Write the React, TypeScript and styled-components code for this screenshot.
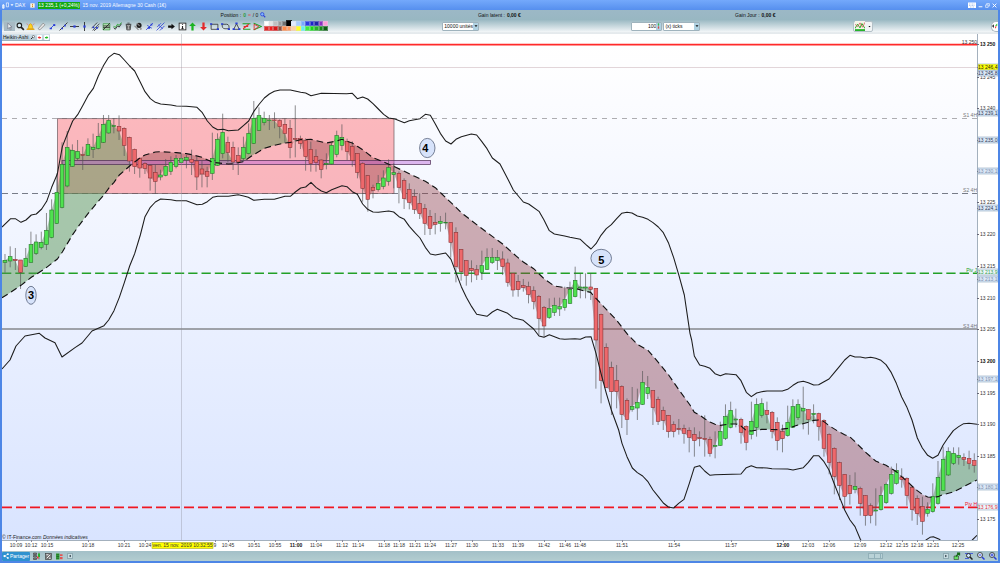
import React from 'react';
import styled, { createGlobalStyle } from 'styled-components';

const GlobalStyle = createGlobalStyle`
  *, *::before, *::after { box-sizing: border-box; }
  body { margin: 0; background: #4d86e6; }
  body, button, input, select { font-family: "Liberation Sans", Arial, sans-serif; font-size: 5px; line-height: 6px; color: #111; }
  button, input, select { margin: 0; padding: 0; border: 0; background: none; }
`;

/* ---------- market data, in thirds of a screen unit ---------- */

type Candle = { x: number; hi: number; top: number; bot: number; lo: number; up: boolean };
type Pt = [number, number];

const STEP = 15.55;

const blocks: { first: number; base: number; rows: string }[] = [
  {
    first: 0,
    base: 120,
    rows: `642 661 667 698 g,619 650 663 682 g,624 658 662 690 r,660 660 697 747 r,624 655 679 680 g,575 614 667 667 g,
583 606 640 645 g,575 607 622 628 g,519 571 613 630 g,478 510 592 595 g,400 457 550 552 g,307 373 502 505 g,
273 322 438 442 g,313 331 379 381 g,300 334 355 362 g,320 344 346 390 r,295 313 346 348 g,281 322 328 354 g,
249 289 325 328 g,225 253 307 309 g,225 241 279 281 g,234 257 260 280 g,226 259 273 300 r,262 265 316 348 r,
290 292 363 395 r,326 328 380 402 r,352 355 384 413 r,367 371 385 402 r,373 377 414 452 r,375 397 424 462 r,
389 405 411 421 g,357 379 406 409 g,349 367 394 405 g,345 355 379 385 g,340 355 368 370 g,345 353 360 385 g,
329 358 367 405 r,350 363 411 450 r,362 387 402 442 r,380 394 409 442 r,278 355 400 420 g,280 298 376 378 g,
221 277 341 355 g,290 307 337 367 r,305 322 366 390 r,322 347 366 405 r,290 322 355 365 g,250 280 341 343 g`,
  },
  {
    first: 48,
    base: 210,
    rows: `93 145 220 222 g,112 137 181 183 g,125 145 158 166 g,135 150 152 180 g,127 150 152 175 r,148 152 170 205 r,
145 163 190 220 r,150 175 233 265 r,106 205 208 262 r,197 206 220 237 r,205 212 260 302 r,215 238 281 305 r,
238 260 277 305 r,268 270 298 325 r,250 280 283 298 g,219 226 282 284 g,182 197 253 262 g,163 203 226 241 g,
206 214 244 270 r,214 230 271 290 r,250 250 307 325 r,277 280 355 395 r,316 317 388 425 r,344 352 361 385 r,
315 340 359 365 g,301 324 349 358 g,268 293 334 347 g,280 308 314 355 g,304 310 352 400 r,325 332 386 417 r,
340 359 397 418 r,358 379 418 432 r,370 400 431 447 r,402 415 460 495 r,420 439 475 495 r,429 457 463 493 r,
438 454 460 485 g,428 457 459 478 g,457 458 517 563 r,472 487 589 637 r,538 538 605 632 r,571 572 616 647 r,
571 595 601 637 r,585 599 615 630 r,542 587 607 630 g,535 562 598 600 g`,
  },
  {
    first: 94,
    base: 570,
    rows: `174 203 217 222 g,180 203 211 240 g,184 207 230 255 r,206 219 277 290 r,250 250 300 320 r,255 275 299 320 r,
267 287 292 305 r,275 290 313 340 r,289 302 335 358 r,315 319 385 437 r,348 352 408 440 r,325 355 382 387 g,
323 346 367 378 g,323 350 357 378 g,290 328 353 362 g,275 298 340 342 g,230 271 320 322 g,250 291 294 325 g,
250 291 294 325 g,250 291 298 330 r,295 295 450 596 r,371 373 571 640 r,460 472 592 594 r,515 532 605 675 r,
525 571 605 655 r,586 589 673 714 r,625 631 688 735 r,591 649 658 665 g,596 637 654 690 g,543 577 643 645 g,
558 592 611 627 g`,
  },
  {
    first: 125,
    base: 1020,
    rows: `151 152 203 255 r,170 178 244 255 r,200 211 241 270 r,225 226 275 293 r,244 253 275 292 r,237 265 268 284 r,
254 266 280 311 r,262 272 292 337 r,262 283 302 350 r,274 293 296 319 r,226 295 298 350 r,290 298 340 350 r,
274 316 319 355 g,245 274 316 318 g,193 230 295 300 g,185 211 262 265 g,206 237 240 262 g,233 238 277 311 r,
256 259 307 331 r,185 244 283 298 g,175 193 262 290 g,175 191 226 233 g,185 211 223 250 r,213 217 274 295 r,
232 247 302 331 r,254 275 296 337 r,197 247 287 290 g,178 200 262 264 g,178 194 233 240 g,140 205 213 268 g,
208 209 238 284 r,193 220 224 250 g,218 221 260 302 r,238 241 325 350 r,280 284 367 403 r,322 325 409 463 r,
365 368 436 480 r,403 403 469 510 r,405 436 461 494 r,397 439 449 460 g,440 445 490 527 r,466 467 527 557 r,
490 497 526 550 r,445 510 513 557 g,439 467 509 512 g,428 433 488 492 g,380 403 460 464 g,370 391 430 434 g,
385 411 418 443 r,412 415 466 497 r,440 443 509 542 r,466 475 521 555 r,470 499 544 584 r,487 508 520 530 g,
430 470 515 518 g,363 412 490 494 g,320 358 451 453 g,322 335 405 408 g,322 340 370 375 g,322 346 353 374 g,
340 352 358 378 r,332 355 370 388 r,340 361 376 398 r`,
  },
];

const candles: Candle[] = blocks.flatMap(({ first, base, rows }) =>
  rows.split(',').map((row, i) => {
    const [hi, top, bot, lo, dir] = row.trim().split(' ');
    return {
      x: 15 + STEP * (first + i),
      hi: base + Number(hi),
      top: base + Number(top),
      bot: base + Number(bot),
      lo: base + Number(lo),
      up: dir === 'g',
    };
  })
);

const shift = (dx: number, dy: number, src: string): Pt[] =>
  src.trim().split(/\s+/).map((p) => {
    const [x, y] = p.split(',').map(Number);
    return [x + dx, y + dy];
  });

const upperBand: Pt[] = [
  ...shift(0, 120, `6,561 32,536 46,536 63,547 78,540 94,525 109,522 125,507 140,484 155,442 172,402 187,320 202,282 218,243
233,224 248,197 264,167 280,145 295,108 311,76 326,52 342,40 358,44 373,60 389,78 404,93 421,127 435,155 451,176 466,187
482,192 513,195 529,198 559,199 591,202 607,218 622,243 638,261 653,269 670,268 685,272 715,270 731,256`),
  ...shift(720, 210, `26,153 41,125 58,102 73,84 88,72 103,64 120,60 151,60 182,67 197,69 213,77 244,70 320,71 337,70 352,86
368,81 383,87 399,101 415,117 431,133 446,144 465,147 493,158 508,152 540,146 556,133 571,136 586,162 601,190 617,213
633,222 648,208 664,200 694,192 710,195 725,214 741,236`),
  ...shift(1320, 570, `157,-96 180,-78 205,-30 220,0 235,18 250,36 266,42 297,64 312,90 328,122 343,132 374,138 390,142 421,148
437,163 453,177 468,161 483,136 499,116 514,104 530,86 545,70 561,67 576,69 592,78 608,82 624,88 639,98 655,111 670,128
686,160 701,203 717,257 733,315 750,430`),
  ...shift(1800, 1020, `275,0 283,48 299,75 314,79 330,85 345,101 361,107 377,101 408,104 423,122 439,157 454,170 470,159
485,155 501,153 547,153 563,148 579,136 594,127 610,124 625,128 641,135 656,134 672,125 687,117 703,98 718,80`),
  ...shift(2340, 1020, `194,60 210,46 225,51 241,51 256,54 272,52 287,55 303,61 318,74 334,98 349,130 365,171 380,200 396,240
412,294 427,324 443,346 458,355 474,346 489,316 505,292 520,272 536,260 551,251 567,250 591,253`),
];

const lowerBand: Pt[] = [
  ...shift(0, 0, `6,1107 30,1080 48,1038 75,1008 118,1000 135,1014 165,1028 186,1071 225,1043 246,1029 276,993 312,977 326,960`),
  ...shift(0, 120, `342,812 358,772 373,728 389,678 404,641 421,585 435,530 451,502 466,486 482,477 513,479 529,482 559,482
575,488 591,494 607,493 622,485 638,472 653,469 685,469 715,464 731,468`),
  ...shift(720, 210, `25,382 41,391 73,388 103,388 135,379 151,379 166,366 182,354 197,351 213,337 228,352 244,363 259,368
275,359 306,347 321,350 337,365 352,373 368,402 383,418 399,426 415,427 446,423 461,426 477,440 493,448 508,469 524,487
540,504 556,532 571,552 586,555 617,549 633,568 648,608`),
  ...shift(1320, 570, `64,290 79,322 95,350 110,373 141,379 157,366 172,358 203,370 219,383 250,391 281,417 297,438 312,442
328,434 359,446 374,448 405,446 421,448 437,441 453,440 468,490 483,550 499,610 514,660`),
  ...shift(1800, 1020, `56,270 66,310 81,350 97,384 112,398 128,408 143,424 159,450 175,470 190,489 205,501 221,504 236,490
252,478 268,430 283,382 299,377 314,393 330,406 345,404 423,402 439,383 454,377 470,383 501,384 516,386 563,387 579,390
610,383 625,367 641,347 656,347 672,365 687,390 703,432 718,470`),
  ...shift(2340, 1020, `194,510 210,540 225,560 241,598 300,680 400,650 438,600 450,592 460,590 478,598 530,640 577,600 591,586`),
];

const average: Pt[] = [
  ...shift(0, 120, `6,773 32,757 63,736 94,712 109,703 140,682 172,657 187,636 202,611 218,584 233,562 264,521 295,484 311,466
326,445 342,427 358,405 373,392 389,378 404,366 421,353 435,345 466,336 482,335 529,338 559,341 575,344 607,352 638,367
685,372 700,371 731,365`),
  ...shift(720, 210, `26,264 41,254 73,235 103,226 135,219 151,217 182,209 213,208 228,212 259,219 290,213 306,208 321,214
337,219 352,229 368,239 399,263 431,276 461,289 493,304 524,319 556,334 586,353 617,383 648,412 664,428 710,464 750,494`),
  ...shift(1320, 570, `188,162 219,190 250,216 281,236 312,266 343,288 374,293 405,295 437,304 452,307 468,325 499,358 530,391
561,431 592,463 624,481 655,517 686,555 717,600 750,645`),
  ...shift(1800, 1020, `283,217 299,225 314,236 330,246 345,253 361,256 392,252 408,252 423,258 439,272 454,273 485,268
532,269 563,265 594,255 625,247 641,241 656,240 672,245 687,257 718,276`),
  ...shift(2340, 1020, `194,284 210,291 225,305 256,336 287,363 318,376 349,395 365,410 380,423 396,438 412,452 427,463
443,471 458,472 474,470 489,464 520,456 551,440 591,420`),
];

const toPath = (pts: Pt[]) => 'M' + pts.map(([x, y]) => `${x} ${y}`).join('L');

const averageAt = (x: number) => {
  const i = average.findIndex((p) => p[0] >= x);
  if (i <= 0) return average[i === 0 ? 0 : average.length - 1][1];
  const [x0, y0] = average[i - 1];
  const [x1, y1] = average[i];
  return y0 + ((y1 - y0) * (x - x0)) / (x1 - x0);
};

/* Area between the moving average and the closes, split where they cross. */
const clouds = (() => {
  const rows = candles.map((c) => ({ x: c.x, close: c.up ? c.top : c.bot, avg: averageAt(c.x) }));
  rows.unshift({ ...rows[0], x: 6, avg: averageAt(6) });
  rows.push({ ...rows[rows.length - 1], x: 2931, avg: averageAt(2931) });
  let green = '';
  let red = '';
  for (let i = 1; i < rows.length; i++) {
    const a = rows[i - 1];
    const b = rows[i];
    const da = a.avg - a.close;
    const db = b.avg - b.close;
    if (da * db >= 0) {
      const d = `M${a.x} ${a.avg}L${b.x} ${b.avg}L${b.x} ${b.close}L${a.x} ${a.close}Z`;
      if (da + db > 0) green += d;
      else red += d;
    } else {
      const t = da / (da - db);
      const mx = a.x + (b.x - a.x) * t;
      const my = a.avg + (b.avg - a.avg) * t;
      const left = `M${a.x} ${a.avg}L${mx} ${my}L${a.x} ${a.close}Z`;
      const right = `M${mx} ${my}L${b.x} ${b.avg}L${b.x} ${b.close}Z`;
      if (da > 0) {
        green += left;
        red += right;
      } else {
        red += left;
        green += right;
      }
    }
  }
  return { green, red };
})();

type Tone = 'plain' | 'bold' | 'yellow' | 'dark' | 'soft' | 'green' | 'red';
const prices: [string, number, Tone][] = [
  ['13 250', 44, 'bold'], ['13 245', 77, 'plain'], ['13 245,8', 73, 'dark'], ['13 246,4', 67, 'yellow'],
  ['13 240', 108, 'plain'], ['13 239,1', 113, 'dark'], ['13 235,0', 140, 'dark'], ['13 230,1', 171, 'soft'],
  ['13 225', 202, 'plain'], ['13 224,1', 208, 'dark'], ['13 220', 234, 'plain'], ['13 215', 266, 'plain'],
  ['13 213,1', 279, 'soft'], ['13 213,9', 272, 'green'], ['13 210', 298, 'plain'], ['13 205', 329, 'plain'],
  ['13 200', 361, 'bold'], ['13 197,1', 379, 'soft'], ['13 195', 393, 'plain'], ['13 190', 424, 'plain'],
  ['13 185', 456, 'plain'], ['13 180,1', 487, 'soft'], ['13 176,9', 507, 'red'], ['13 175', 519, 'plain'],
];
const toneInk: Record<Tone, string> = {
  plain: '#333', bold: '#111', yellow: '#222', dark: '#2b3b55', soft: '#7c90ac', green: '#2fa04a', red: '#e0303c',
};

const times: [string, number][] = [
  ['10:09', 16], ['10:12', 31], ['10:15', 47], ['10:18', 88], ['10:21', 124], ['10:24', 145], ['9', 215],
  ['10:45', 228], ['10:51', 254], ['10:55', 275], ['11:00', 296], ['11:04', 316], ['11:12', 342], ['11:14', 358],
  ['11:18', 384], ['11:18', 399], ['11:21', 415], ['11:24', 430], ['11:27', 451], ['11:30', 472], ['11:33', 498],
  ['11:39', 518], ['11:42', 544], ['11:46', 565], ['11:48', 580], ['11:51', 622], ['11:54', 674], ['11:57', 731],
  ['12:00', 783], ['12:03', 808], ['12:06', 829], ['12:09', 860], ['12:12', 886], ['12:15', 902], ['12:18', 917],
  ['12:21', 933], ['12:25', 958],
];

/* ---------- chart ---------- */

const ChartArea = styled.section`
  position: relative;
  background: #fff;
`;
const ChartSvg = styled.svg`
  display: block;
  width: 100%;
  height: auto;
  font-family: "Liberation Sans", Arial, sans-serif;
  font-size: 5px;
`;
const IndicatorTag = styled.div`
  position: absolute;
  left: 0;
  top: 0;
  height: 7px;
  padding: 0 1px;
  display: flex;
  align-items: center;
  gap: 2px;
  background: linear-gradient(#d5e2ea, #b3cad6);
  border-bottom: 1px solid #9fb2bd;
`;

function Chart() {
  return (
    <ChartArea>
      <ChartSvg viewBox="2 34 996 517" role="img" aria-label="DAX price chart">
        <defs>
          <linearGradient id="sky" x1="0" y1="0" x2="0" y2="1">
            <stop offset="0" stopColor="#ffffff" />
            <stop offset="0.06" stopColor="#fefeff" />
            <stop offset="1" stopColor="#d9e4ff" />
          </linearGradient>
          <clipPath id="plot"><rect x="2" y="34" width="975" height="506" /></clipPath>
        </defs>
        <rect x="2" y="34" width="975" height="506" fill="url(#sky)" />
        <g clipPath="url(#plot)">
          <path d="M2 118.5H977" stroke="#a4a4a8" strokeWidth="0.9" strokeDasharray="5 5" />
          <path d="M2 193.5H977" stroke="#777c88" strokeWidth="1" strokeDasharray="6 4" />
          <rect x="57.5" y="118.7" width="336.5" height="74.8" fill="#ff5a62" fillOpacity="0.42" stroke="#6b5a60" strokeWidth="0.7" />
          <path d="M2 273.3H977" stroke="#22a027" strokeWidth="1.4" strokeDasharray="9.3 4" />
          <path d="M2 329H977" stroke="#555" strokeWidth="1.1" />
          <path d="M2 507.4H977" stroke="#f01722" strokeWidth="1.7" strokeDasharray="10 4" />
          <path d="M2 44.6H977" stroke="#ff2a2a" strokeWidth="1.6" />
          <g transform="scale(0.33333)">
            <path d={clouds.green} fill="#549250" fillOpacity="0.48" />
            <path d={clouds.red} fill="#933c41" fillOpacity="0.4" />
          </g>
          <rect x="62" y="160.4" width="368.5" height="4" fill="#b85ad6" fillOpacity="0.42" stroke="#4b2b52" strokeWidth="0.7" />
          <g transform="scale(0.33333)">
            {candles.map((c) => (
              <g key={c.x}>
                <path d={`M${c.x} ${c.hi}V${c.lo}`} stroke="#555" strokeWidth="2" />
                <rect
                  x={c.x - 5.5}
                  y={c.top}
                  width="11"
                  height={Math.max(1, c.bot - c.top)}
                  fill={c.up ? '#4fe24f' : '#ee686b'}
                  stroke={c.up ? '#27782a' : '#8a3538'}
                  strokeWidth="1.8"
                />
              </g>
            ))}
            <path d={toPath(average)} fill="none" stroke="#111" strokeWidth="3.4" strokeDasharray="20 12" />
            <path d={toPath(upperBand)} fill="none" stroke="#1c1c1c" strokeWidth="3.2" strokeLinejoin="round" />
            <path d={toPath(lowerBand)} fill="none" stroke="#1c1c1c" strokeWidth="3.2" strokeLinejoin="round" />
          </g>
          <path d="M181.5 34V540" stroke="#8a8a96" strokeOpacity="0.35" strokeWidth="1" />
          <path d="M2 67.5H977" stroke="#b08a92" strokeOpacity="0.35" strokeWidth="1" />
        </g>
        {([['3', 31, 295.3, 5.2, 9], ['4', 427.3, 148, 7.7, 9.6], ['5', 601.2, 258.3, 10.3, 9]] as const).map(([n, x, y, rx, ry]) => (
          <g key={n}>
            <ellipse cx={x} cy={y} rx={rx} ry={ry} fill="#d7e3fb" stroke="#55617a" strokeWidth="0.8" />
            <text x={x - (n === '4' ? 2 : 0)} y={y + (n === '5' ? 6 : 4)} textAnchor="middle" fontSize="11" fontWeight="700" fill="#000">{n}</text>
          </g>
        ))}
        <g textAnchor="end" fill="#777">
          <text x="977" y="44" fill="#333">13 250</text>
          <text x="977" y="117">S1 4H</text>
          <text x="977" y="192">S2 4H</text>
          <text x="977" y="328">S3 4H</text>
          <text x="977" y="272" fill="#1d9d22">Piv J</text>
          <text x="977" y="506" fill="#f01722">Piv H</text>
        </g>
        <text x="2" y="539" fill="#222">© IT-Finance.com <tspan fontStyle="italic">Données indicatives</tspan></text>
        <path d="M977.5 34V540.5H2" fill="none" stroke="#a3b0bd" strokeWidth="1" />
        {prices.map(([label, y, tone]) => {
          const boxed = tone !== 'plain' && tone !== 'bold';
          return (
            <g key={label}>
              <path d={`M977 ${y}.5h2`} stroke="#667" strokeWidth="1" />
              {boxed && (
                <rect x="978" y={y - 3} width="20" height="6" fill={tone === 'yellow' ? '#ffff00' : tone === 'dark' || tone === 'soft' ? '#dbe7f6' : '#eef6fa'} stroke="#8ea7c0" strokeWidth="0.6" />
              )}
              <text x={boxed ? 978 : 980} y={y + 2} fill={toneInk[tone]} fontWeight={tone === 'bold' ? 700 : 400}>{label}</text>
            </g>
          );
        })}
        {times.map(([label, x]) => (
          <g key={x}>
            <path d={`M${x}.5 540v2`} stroke="#889" strokeWidth="1" />
            <text x={x} y="547" textAnchor="middle" fill={label.endsWith(':00') ? '#111' : '#333'} fontWeight={label.endsWith(':00') ? 700 : 400}>{label}</text>
          </g>
        ))}
        <rect x="152" y="542.5" width="61" height="6" fill="#ffff00" stroke="#a8a828" strokeWidth="0.6" />
        <text x="182.5" y="547" textAnchor="middle" fill="#333">ven. 15 nov. 2019 10:32:55</text>
      </ChartSvg>
      <IndicatorTag>
        <span>Heikin-Ashi</span>
        <Glyph size={5} name="wrench" />
        <Glyph size={5} name="redArrow" />
        <Glyph size={5} name="greenArrow" />
      </IndicatorTag>
    </ChartArea>
  );
}

/* ---------- icons ---------- */

const K = '#222';
const B = '#2a3ed8';
const glyphs: Record<string, React.ReactNode> = {
  pointer: <path d="M5 2v10l2.500-2.500 2 4.500 1.500-.8-2-4.200h3.500z" fill="#eef3f6" stroke="#667" strokeWidth="1" />,
  search: <><circle cx="6" cy="6" r="4" fill="#d9edf5" stroke={K} strokeWidth="2" /><path d="M9 9l5 5" stroke={K} strokeWidth="3" /></>,
  bell: <><path d="M3 12c2-2 1-8 5-9 4 1 3 7 5 9z" fill="#ffd21f" stroke="#c98a00" /><path d="M1 13h14" stroke="#e0a000" strokeWidth="2" /><path d="M1 3l3 2M15 3l-3 2" stroke="#d55" /></>,
  ruler: <path d="M2 12L11 2l3 3L5 14z" fill="#e8e8e8" stroke="#888" strokeWidth="1.5" />,
  segment: <><path d="M4 12l8-8" stroke={B} strokeWidth="1.5" /><path d="M3 10h4v3H3zM9 4h4v3H9z" fill={B} /></>,
  line: <><path d="M1 15L15 1" stroke={K} strokeWidth="1.5" /><path d="M4 10h3v3H4zM9 5h3v3H9z" fill={B} /></>,
  hline: <><path d="M0 8h16" stroke={K} strokeWidth="1.5" /><path d="M6 6h4v4H6z" fill={B} /></>,
  vline: <><path d="M8 0v16" stroke={K} strokeWidth="1.5" /><path d="M6 6h4v4H6z" fill={B} /></>,
  channel: <><path d="M1 11L11 1M3 15L15 3M5 16l9-8" stroke={K} strokeWidth="1.3" /><path d="M3 8h3v3H3zM9 9h3v3H9z" fill={B} /></>,
  fibo: <><path d="M2 3h12v11H2z" fill="#bce5bc" stroke="#178a1c" /><path d="M2 14L14 2M2 7h12M2 10h12" stroke={K} strokeWidth="1.5" /></>,
  zigzag: <><path d="M1 10l3 3 4-6 3 2 4-6" fill="none" stroke={K} strokeWidth="1.5" /><path d="M1 7l3 3 4-6 3 2 4-5" fill="none" stroke="#1ba022" strokeWidth="1.5" /></>,
  trash: <><path d="M4 5h8l-1 9H5z" fill="#ccc" stroke={K} strokeWidth="1.3" /><path d="M3 4h10M6 2h4M6.500 7v5M9.500 7v5" stroke={K} strokeWidth="1.2" /></>,
  tools: <><circle cx="9" cy="6" r="4.5" fill={K} /><path d="M1 7l7 7M5 2l5 5" stroke="#888" strokeWidth="2" /><circle cx="12" cy="12" r="2" fill="#999" /></>,
  cross: <><path d="M2 14L14 2M4 6l8 5" stroke={B} strokeWidth="1.5" /><path d="M5 9h4v3H5zM10 3h3v3h-3z" fill={B} /></>,
  pitch: <><path d="M1 15L15 1M2 9l7-7M7 15l8-8M4 5l8 7" stroke={B} strokeWidth="1.4" /></>,
  arrow: <path d="M2 6h6V3l6 5-6 5v-3H2z" fill="#111" />,
  info: <><rect x="2" y="2" width="12" height="12" fill="#fff" stroke={K} strokeWidth="1.5" /><path d="M8 7v5M6 12h4M8 4v1.500" stroke={K} strokeWidth="2" /></>,
  up: <path d="M8 1l6 6h-4v8H6V7H2z" fill="#1bb321" />,
  down: <path d="M8 15l6-6h-4V1H6v8H2z" fill="#e32a2a" />,
  box: <><path d="M2 4h12v9H2z" fill="none" stroke={K} strokeWidth="1.3" /><path d="M0 2h4v3H0zM12 11h4v3h-4z" fill={B} /></>,
  oval: <><path d="M2 4h8c4 0 5 4 4 8H7c-4 0-5-3-5-8z" fill="none" stroke={K} strokeWidth="1.3" /><path d="M0 2h4v3H0zM12 11h4v3h-4z" fill={B} /></>,
  triangle: <><path d="M8 3l5 10H3z" fill="none" stroke={K} strokeWidth="1.3" /><path d="M6 1h4v3H6zM1 11h4v3H1zM11 11h4v3h-4z" fill={B} /></>,
  redFan: <><path d="M1 3h14M2 13h13" stroke="#1ba022" strokeWidth="1.8" /><path d="M2 12L12 4M3 8h8" stroke="#e32a2a" strokeWidth="1.8" /></>,
  greenFan: <><path d="M1 2l14 6-14 6" fill="none" stroke="#1ba022" strokeWidth="1.8" /><path d="M2 14V4l8 4z" fill="none" stroke="#e32a2a" strokeWidth="1.5" /></>,
  wrench: <><path d="M3 13l6-6" stroke={K} strokeWidth="3" /><circle cx="11" cy="5" r="3.5" fill="#fff" stroke={K} strokeWidth="1.5" /></>,
  redArrow: <><rect width="16" height="16" rx="3" fill="#fff" /><path d="M2 8l6-5v3h5v4H8v3z" fill="#e33" /></>,
  greenArrow: <><rect width="16" height="16" rx="3" fill="#fff" /><path d="M14 8L8 3v3H3v4h5v3z" fill="#2b2" /></>,
  logo: <><path d="M1 7h4v7H1zM10 2h5v9h-5z" fill="none" stroke="#fff" strokeWidth="1.5" /><path d="M3 5v10" stroke="#fff" strokeWidth="2" /></>,
  caret: <path d="M2 5h12l-6 7z" fill="currentColor" />,
  note: <><rect x="1" y="1" width="14" height="14" fill="#fff3d8" /><path d="M8 3v3M8 8v5" stroke="#c77b22" strokeWidth="3" /></>,
  keyboard: <><rect y="3" width="16" height="11" fill="#fff" /><path d="M2 6h12M2 9h12M4 12h8" stroke="#9bb8e8" strokeWidth="1.5" strokeDasharray="2 1" /></>,
  minimize: <path d="M2 12h12" stroke="#fff" strokeWidth="3" />,
  restore: <path d="M5 5V2h9v8h-3M2 6h8v8H2z" fill="none" stroke="#fff" strokeWidth="2" />,
  close: <path d="M2 2l12 12M14 2L2 14" stroke="#fff" strokeWidth="3" />,
  lens: <><circle cx="6" cy="6" r="4.5" fill="#7db4ff" stroke={B} strokeWidth="2" /><path d="M9 9l5 5" stroke={B} strokeWidth="3" /></>,
  template: <><rect width="16" height="16" fill="#f5f5e8" /><path d="M0 12l4-7 4 6 3-7 5 8" fill="none" stroke="#2a2" strokeWidth="1.5" /><path d="M0 5l4 4 4-6 4 7 4-8" fill="none" stroke="#c55" strokeWidth="1.2" /><path d="M0 13h16v3H0z" fill="#27b32c" /></>,
  share: <><circle cx="4" cy="8" r="3" fill="#fff" /><circle cx="13" cy="3" r="2.5" fill="#fff" /><circle cx="13" cy="13" r="2.5" fill="#fff" /><path d="M4 8l9-5M4 8l9 5" stroke="#fff" strokeWidth="1.5" /></>,
  candles: <><path d="M1 2h6v3H1zM1 7h6v3H1zM1 12h6v3H1z" fill="#888" stroke={K} /><path d="M12 1v14" stroke={K} /><path d="M10 3h4v7h-4z" fill="#23b52b" /><path d="M8 9h3v4H8z" fill="#e33" /></>,
  noteEdit: <><rect x="1" y="1" width="14" height="14" fill="#777" stroke={K} /><path d="M4 12l8-8M3 4h5M9 12h4" stroke="#fff" strokeWidth="2" /></>,
  book: <><rect x="0" y="1" width="8" height="14" fill="#35a13b" /><path d="M1 4h6M1 8h6M1 12h6" stroke="#14591a" strokeWidth="1.5" /><path d="M9 3h6v4H9zM9 9h6v5H9z" fill="#e25454" /></>,
  leftTri: <path d="M11 3v10L4 8z" fill="#1d2b35" />,
  rightTri: <path d="M5 3v10l7-5z" fill="#1d2b35" />,
  export: <><path d="M2 8h9v7H2z" fill="#6d6" stroke={K} /><path d="M6 9l6-7M8 2h5v5" fill="none" stroke="#146b18" strokeWidth="2.5" /></>,
  zoomFit: <><path d="M0 3h16M0 13h8" stroke={B} strokeWidth="1.5" /><circle cx="7" cy="7" r="4" fill="#cfe6ff" stroke={K} strokeWidth="1.8" /><path d="M10 10l5 5" stroke={K} strokeWidth="3" /></>,
  zoomOut: <><circle cx="6" cy="6" r="5" fill="#e6f2ff" stroke={K} strokeWidth="1.5" /><path d="M3.500 6h5" stroke={B} strokeWidth="2" /><path d="M10 10l5 5" stroke={B} strokeWidth="3" /></>,
  zoomIn: <><circle cx="6" cy="6" r="5" fill="#e6f2ff" stroke={K} strokeWidth="1.5" /><path d="M3 6h6M6 3v6" stroke={B} strokeWidth="2" /><path d="M10 10l5 5" stroke={B} strokeWidth="3" /></>,
  dock: <><path d="M0 8l5-5v10z" fill={K} /><path d="M8 7l6-6v6z" fill="#2b2" /><path d="M8 9h5l-5 6z" fill="#e33" /></>,
};

const GlyphSvg = styled.svg<{ $size: number }>`
  display: block;
  flex: none;
  width: ${(p) => p.$size}px;
  height: ${(p) => p.$size}px;
`;
function Glyph({ name, size }: { name: string; size: number }) {
  return (
    <GlyphSvg viewBox="0 0 16 16" $size={size} fill="none" aria-hidden="true">
      {glyphs[name]}
    </GlyphSvg>
  );
}

/* ---------- window chrome ---------- */

const Window = styled.div`
  padding: 0 2px 2px;
  background: #4d86e6;
`;
const TitleBar = styled.header`
  height: 10px;
  margin: 0 -2px;
  padding: 0 3px 0 2px;
  display: flex;
  align-items: center;
  gap: 3px;
  color: #fff;
  background: linear-gradient(#74a9fb, #568fee);
`;
const Quote = styled.span`
  height: 7px;
  line-height: 7px;
  background: #12a812;
`;
const TitleText = styled.span`
  color: #f4f8ff;
`;
const IconButton = styled.button<{ $pressed?: boolean }>`
  display: flex;
  align-items: center;
  justify-content: center;
  height: 9px;
  min-width: 6px;
  color: inherit;
  background: ${(p) => (p.$pressed ? '#a8bac4' : 'transparent')};
`;
const Brand = styled.div`
  display: flex;
  align-items: center;
  gap: 1px;
  margin-right: 2px;
`;
const WindowButtons = styled.div`
  margin-left: auto;
  display: flex;
  align-items: center;
  gap: 1px;
`;
const PositionBar = styled.div`
  height: 10px;
  padding-left: 11.4%;
  display: grid;
  grid-template-columns: repeat(3, 29%);
  align-items: center;
  justify-items: center;
  background: linear-gradient(#9cb8c6, #98b7c2);
`;
const PositionCell = styled.div`
  display: flex;
  align-items: center;
  gap: 2px;
`;
const Flat = styled.b<{ $ink: string }>`
  color: ${(p) => p.$ink};
`;
const Toolbar = styled.div`
  height: 14px;
  padding: 0 0 2px 2px;
  display: flex;
  align-items: center;
  background: linear-gradient(#9bb9c3, #e2eaee 70%, #f6f9fa 88%, #c5d0d6 92%, #fff);
`;
const ToolStrip = styled.div`
  flex: none;
  width: 259px;
  display: grid;
  grid-template-columns: repeat(24, 1fr);
`;
const Palette = styled.div`
  flex: none;
  width: 64px;
  display: grid;
  grid-template-columns: repeat(14, 1fr);
  margin-left: 1px;
`;
const Swatch = styled.button<{ $fill: string; $active?: boolean }>`
  height: 5px;
  background: ${(p) => p.$fill};
  border: 1px solid ${(p) => (p.$active ? '#000' : 'rgba(210, 220, 225, 0.35)')};
  outline: ${(p) => (p.$active ? '1px solid #222' : 'none')};
`;
const Field = styled.label<{ $width: number; $before: string }>`
  flex: none;
  width: ${(p) => p.$width}px;
  height: 9px;
  margin-left: ${(p) => p.$before};
  display: flex;
  align-items: center;
  justify-content: space-between;
  overflow: hidden;
  background: #fff;
  border: 1px solid #9fb3bd;
  border-radius: 1px;
`;
const Choice = styled.select`
  flex: 1;
  min-width: 0;
  height: 7px;
  padding-left: 1px;
  appearance: none;
`;
const NumberBox = styled.input`
  flex: 1;
  min-width: 0;
  height: 7px;
  text-align: right;
`;
const FieldArrow = styled.span`
  flex: none;
  width: 5px;
  height: 7px;
  display: flex;
  flex-direction: column;
  align-items: center;
  justify-content: center;
  background: #b0d2e2;
`;
const TemplateButton = styled.button`
  flex: none;
  height: 11px;
  margin-left: 15.4%;
  padding: 0 1px;
  display: flex;
  align-items: center;
  gap: 3px;
  background: #f2f5f6;
  border: 1px solid #b4c1c8;
  border-radius: 2px;
`;
const DockButton = styled.button`
  flex: none;
  margin-left: auto;
  height: 11px;
  display: flex;
  align-items: center;
  background: #fff;
  border: 1px solid #aab8c0;
  border-right: 0;
  border-radius: 5px 0 0 5px;
`;
const StatusBar = styled.footer`
  height: 10px;
  padding-right: 1px;
  display: flex;
  align-items: center;
  gap: 4px;
  background: linear-gradient(#a3c0c8, #b3cdd0);
`;
const ShareButton = styled.button`
  height: 9px;
  margin-right: -1px;
  padding: 0 1px;
  display: flex;
  align-items: center;
  gap: 1px;
  color: #fff;
  background: #2e92cf;
  border-radius: 1px;
`;
const ScrollTrack = styled.div`
  flex: 1;
  height: 8px;
  display: flex;
  align-items: center;
  justify-content: flex-end;
  padding-right: 5.6%;
`;
const ScrollThumb = styled.div`
  width: 15px;
  height: 6px;
  background: repeating-linear-gradient(90deg, #b9d2d7 0 5px, #8fb0ba 5px 6px);
  border: 1px solid #92b0b8;
`;
const StepButton = styled.button`
  flex: none;
  width: 6px;
  height: 6px;
  display: flex;
  align-items: center;
  justify-content: center;
  background: #c9dde2;
  border: 1px solid #8fabb3;
`;

const tools = [
  'pointer', 'search', 'bell', 'ruler', 'segment', 'line', 'hline', 'vline', 'channel', 'fibo', 'zigzag', 'trash',
  'tools', 'cross', 'pitch', 'arrow', 'info', 'up', 'down', 'box', 'oval', 'triangle', 'redFan', 'greenFan',
];
const swatches = [
  '#ffffff', '#e4e4e4', '#c0c0c0', '#9a9a9a', '#6e6e6e', '#000000', '#e2ebff', '#a5cbff', '#78a8ff', '#2a3ae0', '#1c22c8', '#2222a8', '#8a2fc0', '#ff9ad8',
  '#e02828', '#f02020', '#d81818', '#8e4a3a', '#ff8a4a', '#ff9a60', '#ffd0a0', '#ffff20', '#60f0f0', '#40e840', '#18d818', '#28b028', '#188818', '#0e5e12',
];

export default function App() {
  return (
    <Window>
      <GlobalStyle />
      <TitleBar>
        <Brand>
          <Glyph name="logo" size={7} />
          <Glyph name="caret" size={4} />
          <span>DAX</span>
        </Brand>
        <Glyph name="note" size={5} />
        <Quote>13 235,1 (+0,24%)</Quote>
        <TitleText>15 nov. 2019 Allemagne 30 Cash (1€)</TitleText>
        <WindowButtons>
          <IconButton aria-label="Keyboard"><Glyph name="keyboard" size={8} /></IconButton>
          <IconButton aria-label="Minimize"><Glyph name="minimize" size={5} /></IconButton>
          <IconButton aria-label="Restore"><Glyph name="restore" size={5} /></IconButton>
          <IconButton aria-label="Close"><Glyph name="close" size={5} /></IconButton>
        </WindowButtons>
      </TitleBar>
      <PositionBar>
        <PositionCell>
          <span>Position :</span>
          <Flat $ink="#2c9a3c">0</Flat>
          <Flat $ink="#d85a64">=</Flat>
          <span>/ 0</span>
          <Glyph name="lens" size={6} />
        </PositionCell>
        <PositionCell>Gain latent : <b>0,00 €</b></PositionCell>
        <PositionCell>Gain Jour : <b>0,00 €</b></PositionCell>
      </PositionBar>
      <Toolbar>
        <ToolStrip>
          {tools.map((name) => (
            <IconButton key={name} aria-label={name} $pressed={name === 'pointer'}>
              <Glyph name={name} size={9} />
            </IconButton>
          ))}
        </ToolStrip>
        <Palette>
          {swatches.map((fill) => (
            <Swatch key={fill} $fill={fill} $active={fill === '#000000'} aria-label={`Colour ${fill}`} />
          ))}
        </Palette>
        <Field $width={37} $before="11.5%">
          <Choice aria-label="Units" defaultValue="u"><option value="u">10000 unités</option></Choice>
          <FieldArrow><Glyph name="caret" size={4} /></FieldArrow>
        </Field>
        <Field $width={31} $before="15.3%">
          <NumberBox aria-label="Tick count" defaultValue="100" />
          <FieldArrow><Glyph name="up" size={3} /><Glyph name="down" size={3} /></FieldArrow>
        </Field>
        <Field $width={37} $before="1px">
          <Choice aria-label="Period" defaultValue="t"><option value="t">(x) ticks</option></Choice>
          <FieldArrow><Glyph name="caret" size={4} /></FieldArrow>
        </Field>
        <TemplateButton aria-label="Chart template">
          <Glyph name="template" size={10} />
          <Glyph name="caret" size={3} />
        </TemplateButton>
        <DockButton aria-label="Dock panel"><Glyph name="dock" size={6} /></DockButton>
      </Toolbar>
      <Chart />
      <StatusBar>
        <ShareButton><Glyph name="share" size={6} />Partager</ShareButton>
        <IconButton aria-label="Candles"><Glyph name="candles" size={8} /></IconButton>
        <IconButton aria-label="Notes"><Glyph name="noteEdit" size={7} /></IconButton>
        <IconButton aria-label="Order book"><Glyph name="book" size={7} /></IconButton>
        <StepButton aria-label="Scroll left"><Glyph name="leftTri" size={4} /></StepButton>
        <ScrollTrack><ScrollThumb /></ScrollTrack>
        <StepButton aria-label="Scroll right"><Glyph name="rightTri" size={4} /></StepButton>
        <IconButton aria-label="Export"><Glyph name="export" size={8} /></IconButton>
        <IconButton aria-label="Fit zoom"><Glyph name="zoomFit" size={8} /></IconButton>
        <IconButton aria-label="Zoom out"><Glyph name="zoomOut" size={8} /></IconButton>
        <IconButton aria-label="Zoom in"><Glyph name="zoomIn" size={8} /></IconButton>
      </StatusBar>
    </Window>
  );
}
